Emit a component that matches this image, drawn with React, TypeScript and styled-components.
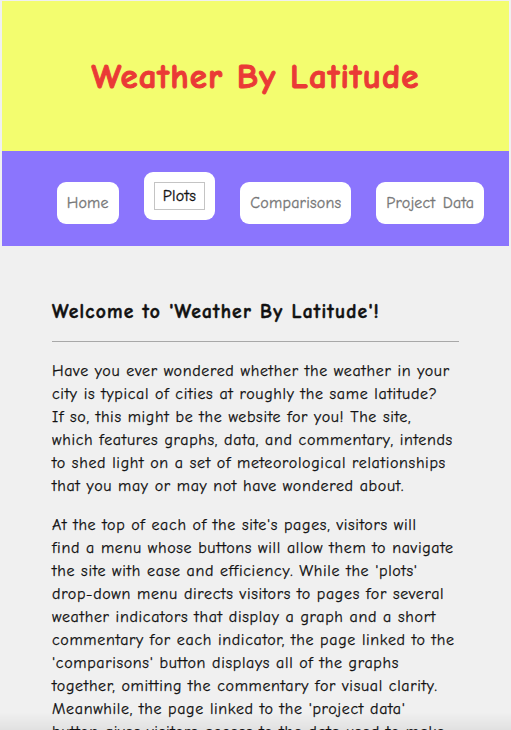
import styled, { createGlobalStyle } from "styled-components";

const GlobalStyle = createGlobalStyle`
	html, body {
		background-color: #f0f0f0;
	}
	body {
		margin: 1px 2px 0;
		font-family: "Comic Sans MS", "Comic Neue", "DejaVu Sans", sans-serif;
	}
`;

const Header = styled.header`
	height: 150px;
	background-color: #f3fd6f;
	display: flex;
	align-items: center;
	justify-content: center;
`;

const Title = styled.h1`
	margin: 0;
	color: #ea3a36;
	font-size: 35px;
	letter-spacing: 1.1px;
	font-weight: bold;
	-webkit-text-stroke: 1px #ea3a36;
`;

const Nav = styled.nav`
	background-color: #8b75fd;
	height: 95px;
	box-sizing: border-box;
	padding-top: 31px;
`;

const NavList = styled.ul`
	list-style: none;
	margin: 0;
	padding: 0 0 0 30px;
	display: flex;
	justify-content: center;
	align-items: flex-start;
	gap: 25px;
`;

const NavItem = styled.li<{ $raised?: boolean }>`
	background-color: white;
	border-radius: 9px;
	padding: 10px;
	margin-top: ${(p) => (p.$raised ? "-10px" : "0")};
	color: #777;
	font-size: 16px;
	line-height: 22px;
	letter-spacing: 0.2px;
	word-spacing: 2px;
	white-space: nowrap;
	-webkit-text-stroke: 0.3px #777;
`;

const DropButton = styled.button`
	font-family: inherit;
	font-size: 16px;
	line-height: 22px;
	letter-spacing: 0.3px;
	color: #111;
	background-color: white;
	border: 1px solid #c4c4c4;
	padding: 2px 8px;
	margin: 0;
	border-radius: 0;
	display: block;
	-webkit-text-stroke: 0.3px #111;
`;

const Main = styled.main`
	padding: 40px 50px 0;
	color: #111;
`;

const Heading = styled.h3`
	margin: 13px 0 9px;
	font-size: 19.5px;
	letter-spacing: 1.2px;
	line-height: 26px;
	font-weight: bold;
	-webkit-text-stroke: 0.5px #111;
`;

const Rule = styled.hr`
	margin: 16px 0 18px;
	border: none;
	border-top: 1px solid #a8a8a8;
`;

const Paragraph = styled.p`
	margin: 16px 0;
	font-size: 16px;
	line-height: 23px;
	letter-spacing: 0.65px;
	-webkit-text-stroke: 0.25px #111;
`;

const Line = styled.span`
	display: block;
	white-space: nowrap;
`;

const BottomFade = styled.div`
	position: fixed;
	left: 0;
	right: 0;
	bottom: 0;
	height: 18px;
	background: linear-gradient(to bottom, rgba(0, 0, 0, 0), rgba(0, 0, 0, 0.06));
	pointer-events: none;
`;

const intro = [
	"Have you ever wondered whether the weather in your",
	"city is typical of cities at roughly the same latitude?",
	"If so, this might be the website for you! The site,",
	"which features graphs, data, and commentary, intends",
	"to shed light on a set of meteorological relationships",
	"that you may or may not have wondered about.",
];

const guide = [
	"At the top of each of the site's pages, visitors will",
	"find a menu whose buttons will allow them to navigate",
	"the site with ease and efficiency. While the 'plots'",
	"drop-down menu directs visitors to pages for several",
	"weather indicators that display a graph and a short",
	"commentary for each indicator, the page linked to the",
	"'comparisons' button displays all of the graphs",
	"together, omitting the commentary for visual clarity.",
	"Meanwhile, the page linked to the 'project data'",
	"button gives visitors access to the data used to make",
	"the graphs.",
];

const navLinks = ["Home", "Plots", "Comparisons", "Project Data"];

const App = () => {
	return (
		<>
			<GlobalStyle />
			<Header>
				<Title>Weather By Latitude</Title>
			</Header>
			<Nav>
				<NavList>
					{navLinks.map((link) =>
						link === "Plots" ? (
							<NavItem key={link} $raised>
								<DropButton type="button">{link}</DropButton>
							</NavItem>
						) : (
							<NavItem key={link}>{link}</NavItem>
						)
					)}
				</NavList>
			</Nav>
			<Main>
				<Heading>Welcome to 'Weather By Latitude'!</Heading>
				<Rule />
				<Paragraph>
					{intro.map((line) => (
						<Line key={line}>{line}</Line>
					))}
				</Paragraph>
				<Paragraph>
					{guide.map((line) => (
						<Line key={line}>{line}</Line>
					))}
				</Paragraph>
			</Main>
			<BottomFade />
		</>
	);
};

export default App;
